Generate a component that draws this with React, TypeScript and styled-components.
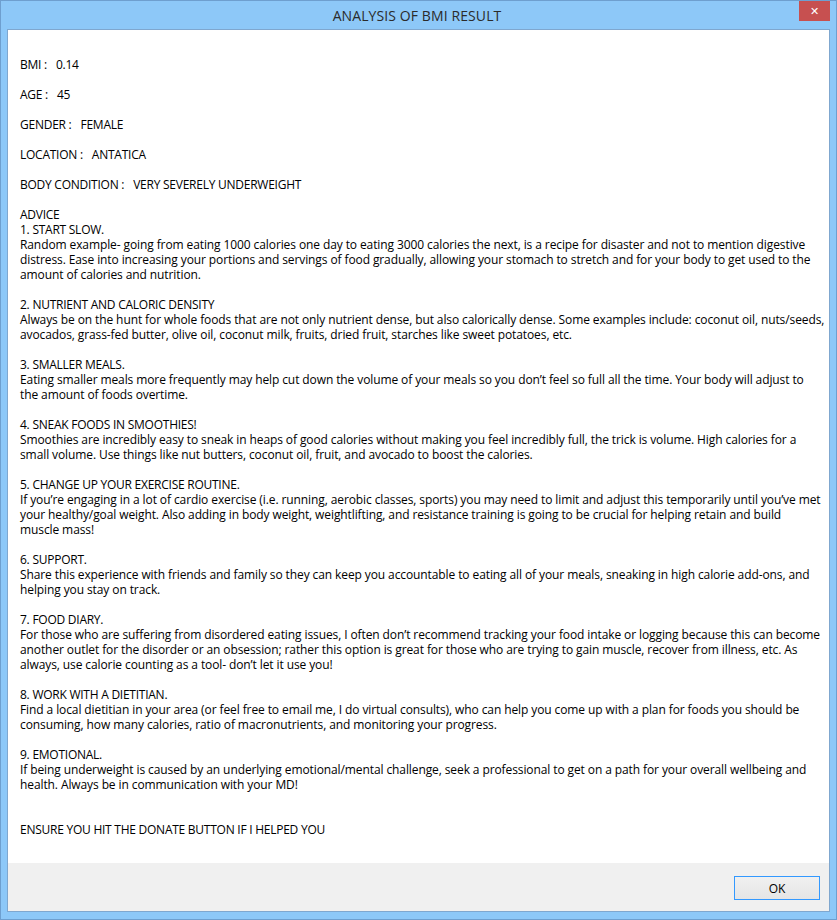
import React from "react";
import styled, { createGlobalStyle } from "styled-components";

const Global = createGlobalStyle`
  html, body { margin: 0; padding: 0; background: #8DC8F8; }
  * { box-sizing: border-box; }
`;

const Window = styled.div`
  width: 837px;
  height: 920px;
  background: #8DC8F8;
  border: 1px solid #6E9FCF;
  display: flex;
  flex-direction: column;
  padding: 0 6px 7px 6px;
  font-family: "Open Sans", "Noto Sans", sans-serif;
`;

const TitleBar = styled.div`
  height: 28px;
  display: grid;
  grid-template-columns: 1fr auto 1fr;
  align-items: start;
  margin: 0 -6px;
  padding-right: 6px;
`;

const Title = styled.div`
  grid-column: 2;
  font-size: 14px;
  line-height: 30px;
  color: #2B2B2B;
  letter-spacing: 0.1px;
  padding-left: 3px;
`;

const CloseButton = styled.div`
  grid-column: 3;
  justify-self: end;
  width: 31px;
  height: 20px;
  background: #C75050;
  color: #fff;
  font-size: 11px;
  font-weight: 700;
  display: flex;
  align-items: center;
  justify-content: center;
  font-family: "DejaVu Sans", sans-serif;
`;

const Client = styled.div`
  flex: 1;
  border: 1px solid #7FA7CF;
  display: flex;
  flex-direction: column;
  background: #fff;
`;

const Content = styled.div`
  flex: 1;
  padding: 27px 12px 0 12px;
  font-size: 12px;
  line-height: 15px;
  color: #000;
  letter-spacing: -0.1px;
`;

const Field = styled.div`
  margin-bottom: 15px;
  white-space: pre;
  letter-spacing: -0.25px;
`;

const Value = styled.span`
  margin-left: 9px;
`;

const Section = styled.div<{ $gap?: number }>`
  margin-bottom: ${(p) => p.$gap ?? 15}px;
`;

const Line = styled.div<{ $caps?: boolean }>`
  white-space: pre;
  letter-spacing: ${(p) => (p.$caps ? "-0.25px" : "inherit")};
`;

const Footer = styled.div`
  height: 48px;
  background: #F0F0F0;
  display: flex;
  justify-content: flex-end;
  align-items: flex-start;
  padding: 13px 9px 0 0;
`;

const OkButton = styled.button`
  width: 86px;
  height: 24px;
  border: 1px solid #3399FF;
  background: linear-gradient(#F0F0F0, #E5E5E5);
  font-family: "Open Sans", "Noto Sans", sans-serif;
  font-size: 12px;
  color: #000;
  padding: 0;
`;

const fields: [string, string][] = [
  ["BMI :", "0.14"],
  ["AGE :", "45"],
  ["GENDER :", "FEMALE"],
  ["LOCATION :", "ANTATICA"],
  ["BODY CONDITION :", "VERY SEVERELY UNDERWEIGHT"],
];

const sections: string[][] = [
  [
    "2. NUTRIENT AND CALORIC DENSITY",
    "Always be on the hunt for whole foods that are not only nutrient dense, but also calorically dense. Some examples include: coconut oil, nuts/seeds,",
    "avocados, grass-fed butter, olive oil, coconut milk, fruits, dried fruit, starches like sweet potatoes, etc.",
  ],
  [
    "3. SMALLER MEALS.",
    "Eating smaller meals more frequently may help cut down the volume of your meals so you don’t feel so full all the time. Your body will adjust to",
    "the amount of foods overtime.",
  ],
  [
    "4. SNEAK FOODS IN SMOOTHIES!",
    "Smoothies are incredibly easy to sneak in heaps of good calories without making you feel incredibly full, the trick is volume. High calories for a",
    "small volume. Use things like nut butters, coconut oil, fruit, and avocado to boost the calories.",
  ],
  [
    "5. CHANGE UP YOUR EXERCISE ROUTINE.",
    "If you’re engaging in a lot of cardio exercise (i.e. running, aerobic classes, sports) you may need to limit and adjust this temporarily until you’ve met",
    "your healthy/goal weight. Also adding in body weight, weightlifting, and resistance training is going to be crucial for helping retain and build",
    "muscle mass!",
  ],
  [
    "6. SUPPORT.",
    "Share this experience with friends and family so they can keep you accountable to eating all of your meals, sneaking in high calorie add-ons, and",
    "helping you stay on track.",
  ],
  [
    "7. FOOD DIARY.",
    "For those who are suffering from disordered eating issues, I often don’t recommend tracking your food intake or logging because this can become",
    "another outlet for the disorder or an obsession; rather this option is great for those who are trying to gain muscle, recover from illness, etc. As",
    "always, use calorie counting as a tool- don’t let it use you!",
  ],
  [
    "8. WORK WITH A DIETITIAN.",
    "Find a local dietitian in your area (or feel free to email me, I do virtual consults), who can help you come up with a plan for foods you should be",
    "consuming, how many calories, ratio of macronutrients, and monitoring your progress.",
  ],
  [
    "9. EMOTIONAL.",
    "If being underweight is caused by an underlying emotional/mental challenge, seek a professional to get on a path for your overall wellbeing and",
    "health. Always be in communication with your MD!",
  ],
];

export default function App() {
  return (
    <>
      <Global />
      <Window>
        <TitleBar>
          <Title>ANALYSIS OF BMI RESULT</Title>
          <CloseButton>✕</CloseButton>
        </TitleBar>
        <Client>
          <Content>
            {fields.map(([k, v]) => (
              <Field key={k}>
                {k}
                <Value>{v}</Value>
              </Field>
            ))}
            <Section>
              <Line $caps>ADVICE</Line>
              <Line $caps>1. START SLOW.</Line>
              <Line>Random example- going from eating 1000 calories one day to eating 3000 calories the next, is a recipe for disaster and not to mention digestive</Line>
              <Line>distress. Ease into increasing your portions and servings of food gradually, allowing your stomach to stretch and for your body to get used to the</Line>
              <Line>amount of calories and nutrition.</Line>
            </Section>
            {sections.map((lines, i) => (
              <Section key={i} $gap={i === sections.length - 1 ? 30 : 15}>
                {lines.map((l, j) => (
                  <Line key={j} $caps={j === 0}>
                    {l}
                  </Line>
                ))}
              </Section>
            ))}
            <Line $caps>ENSURE YOU HIT THE DONATE BUTTON IF I HELPED YOU</Line>
          </Content>
          <Footer>
            <OkButton>OK</OkButton>
          </Footer>
        </Client>
      </Window>
    </>
  );
}
